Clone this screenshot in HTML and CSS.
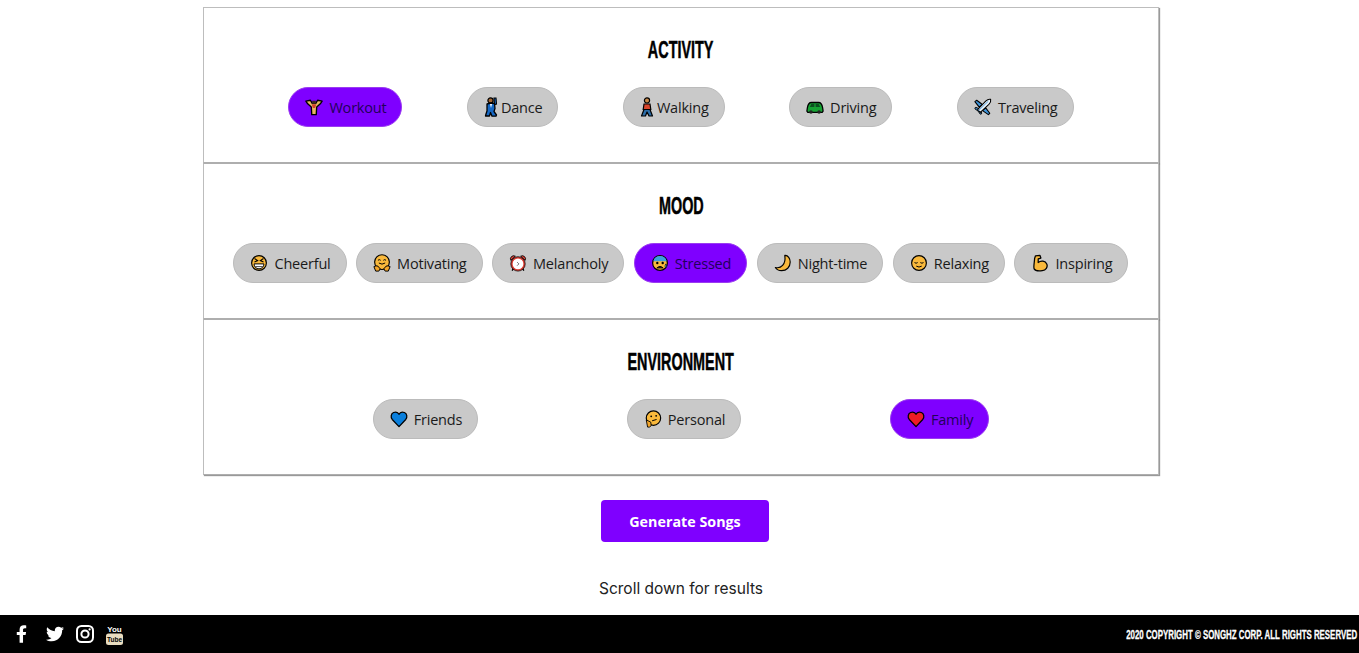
FILE: index.html
```html
<!DOCTYPE html>
<html lang="en">
  <head>
    <meta charset="UTF-8" />
    <meta name="viewport" content="width=device-width, initial-scale=1.0" />
    <title>Songhz</title>
    <link rel="stylesheet" href="styles.css">
  </head>
  <body>
    <!-- emoji set -->
    <svg class="sprite" xmlns="http://www.w3.org/2000/svg">
      <symbol id="e-workout" viewBox="0 0 20 20">
        <path d="M1 3.500L6 2.500 8 6h4l2-3.500 5 1-2 3-4 3.500-.5 8.500h-5L7 10 3 6.500z" fill="#e5b562" stroke="#000" stroke-width="1.500" stroke-linejoin="round"/>
        <path d="M7.500 7h5l-1.200 4H8.700z" fill="#d2402a"/>
        <rect x="8" y="3" width="4" height="3.500" fill="#3a2a1a"/>
      </symbol>
      <symbol id="e-dance" viewBox="0 0 14 20">
        <path d="M10 1l2 0 .5 6-2 .5z" fill="#1668c4" stroke="#000" stroke-width="1.100"/>
        <circle cx="6.500" cy="3.500" r="2.600" fill="#a5652f" stroke="#000" stroke-width="1.200"/>
        <path d="M3 7l4-1 3.500.5.500 5-1 3 2.500 3.500-.5 1.200H8L6.500 15.500 5.500 19H1.500L2 17l1-3z" fill="#1668c4" stroke="#000" stroke-width="1.300" stroke-linejoin="round"/>
        <path d="M6 7l1 4 1-4z" fill="#fff"/>
      </symbol>
      <symbol id="e-walking" viewBox="0 0 14 20">
        <circle cx="7" cy="3.400" r="2.600" fill="#c98a4a" stroke="#000" stroke-width="1.200"/>
        <path d="M4 7h6l.8 5.500H3.200z" fill="#d8452c" stroke="#000" stroke-width="1.200"/>
        <path d="M4 12.500h6l2.500 6.500H9L7 15l-1.500 4H1.500z" fill="#2c6da8" stroke="#000" stroke-width="1.200" stroke-linejoin="round"/>
      </symbol>
      <symbol id="e-driving" viewBox="0 0 20 20">
        <path d="M1 14.500l.5-3.500C2 8 3.500 5 6 5h8c2.500 0 4 3 4.500 6l.5 3.500-1 1.500H2z" fill="#17a334" stroke="#000" stroke-width="1.400" stroke-linejoin="round"/>
        <path d="M6 6.500h3.300V10H4.300zM10.700 6.500H14L15.700 10h-5z" fill="#0c4f20"/>
        <circle cx="5.500" cy="15.500" r="2" fill="#222"/>
        <circle cx="14.500" cy="15.500" r="2" fill="#222"/>
      </symbol>
      <symbol id="e-plane" viewBox="0 0 20 20">
        <path d="M9 7L3 2.500 1 4l5 6.500z" fill="#3f96dd" stroke="#000" stroke-width="1.200" stroke-linejoin="round"/>
        <path d="M13 11l4.500 6-1.500 1.500L9.500 14z" fill="#3f96dd" stroke="#000" stroke-width="1.200" stroke-linejoin="round"/>
        <path d="M4 11L1.500 10.500 1 12l3.500 2.500L7 18l1.500-.5L8 15z" fill="#3f96dd" stroke="#000" stroke-width="1.100" stroke-linejoin="round"/>
        <path d="M18.500 1.500c-2-.5-4 .5-5.500 2L4 13l3 3 9.500-9c1.500-1.500 2.500-3.500 2-5.500z" fill="#f2f7fb" stroke="#000" stroke-width="1.200" stroke-linejoin="round"/>
        <path d="M5 14l11-10.500" stroke="#3f96dd" stroke-width="1"/>
      </symbol>
      <symbol id="e-cheerful" viewBox="0 0 20 20">
        <circle cx="10" cy="10" r="8.200" fill="#f9b93c" stroke="#000" stroke-width="1.300"/>
        <path d="M5 5l3.500 2.300L5 9M15 5l-3.500 2.300L15 9" fill="none" stroke="#000" stroke-width="1.200"/>
        <path d="M4.500 11h11c0 3.200-2.500 5.500-5.500 5.500S4.500 14.200 4.500 11z" fill="#fff" stroke="#000" stroke-width="1.100"/>
        <path d="M6 14h8" stroke="#000" stroke-width=".8"/>
      </symbol>
      <symbol id="e-hug" viewBox="0 0 20 20">
        <circle cx="10" cy="9" r="8.200" fill="#f9b93c" stroke="#000" stroke-width="1.300"/>
        <path d="M5.500 7q1.500-1.500 3 0M11.500 7q1.500-1.500 3 0" fill="none" stroke="#000" stroke-width="1.100"/>
        <path d="M6.500 10q3.500 2.500 7 0" fill="none" stroke="#000" stroke-width="1.100"/>
        <path d="M1 14q2.500-1.500 4.500-.5l2.500 3-1.500 2.500H3zM19 14q-2.500-1.500-4.500-.5l-2.500 3 1.500 2.500H17z" fill="#f4a62a" stroke="#000" stroke-width="1.100" stroke-linejoin="round"/>
      </symbol>
      <symbol id="e-clock" viewBox="0 0 20 20">
        <path d="M2 7a3.500 3.500 0 0 1 5-4.500zM18 7a3.500 3.500 0 0 0-5-4.500z" fill="#e8443a" stroke="#000"/>
        <path d="M5 16l-1.500 2.500M15 16l1.500 2.500" stroke="#000" stroke-width="1.500"/>
        <circle cx="10" cy="11" r="7" fill="#fff" stroke="#d93b30" stroke-width="2"/>
        <circle cx="10" cy="11" r="8" fill="none" stroke="#000" stroke-width=".8"/>
        <path d="M9 9l2 2-2 2" fill="none" stroke="#666" stroke-width="1"/>
      </symbol>
      <symbol id="e-stressed" viewBox="0 0 20 20">
        <circle cx="10" cy="10" r="8.200" fill="#f9b93c" stroke="#000" stroke-width="1.300"/>
        <path d="M2.500 8a7.800 7.800 0 0 1 15 0z" fill="#3aa0e0"/>
        <circle cx="7" cy="10" r="1.300" fill="#000"/>
        <circle cx="13" cy="10" r="1.300" fill="#000"/>
        <path d="M6.500 15.500q3.500-3.500 7 0z" fill="#333" stroke="#000"/>
        <path d="M16.500 11q2 2.500 0 4.500q-2-2 0-4.500z" fill="#67c0f0" stroke="#000" stroke-width=".7"/>
      </symbol>
      <symbol id="e-moon" viewBox="0 0 20 20">
        <path d="M12.500 1.500c3 0 5.500 3.500 5.500 7.500 0 5.500-4 9.500-9.500 9.500-3 0-5.500-1-7-3.500 6 1.500 12-3 10.500-13.500z" fill="#f9b93c" stroke="#000" stroke-width="1.300" stroke-linejoin="round"/>
      </symbol>
      <symbol id="e-relax" viewBox="0 0 20 20">
        <circle cx="10" cy="10" r="8.200" fill="#f9b93c" stroke="#000" stroke-width="1.300"/>
        <path d="M5 9.500q1.800 1.500 3.500 0M11.500 9.500q1.800 1.500 3.500 0M7 13.500q3 2 6 0" fill="none" stroke="#000" stroke-width="1.100"/>
      </symbol>
      <symbol id="e-muscle" viewBox="0 0 20 20">
        <path d="M5 2l5-.5 1 3-3 1 0 4c3-2.500 8-2 9.500 1.500s-1 7-5 7.500-8 0-9-2S4 8 4 5z" fill="#f9b93c" stroke="#000" stroke-width="1.400" stroke-linejoin="round"/>
      </symbol>
      <symbol id="e-blue" viewBox="0 0 20 20">
        <path d="M10 18.500L2.500 10.500C.5 8 1 4 4 2.800c2.500-1 5 0 6 2 1-2 3.500-3 6-2 3 1.200 3.500 5.200 1.500 7.700z" fill="#0a7fdc" stroke="#000" stroke-width="1.400" stroke-linejoin="round"/>
      </symbol>
      <symbol id="e-think" viewBox="0 0 20 20">
        <circle cx="10.500" cy="9" r="8" fill="#f9b93c" stroke="#000" stroke-width="1.300"/>
        <circle cx="8" cy="7" r="1" fill="#000"/>
        <circle cx="13.500" cy="6.500" r="1" fill="#000"/>
        <path d="M9 12l5-1.500" stroke="#000" stroke-width="1.100"/>
        <path d="M2.500 11l5 2.500.5 4-2 1.500H4z" fill="#f4a62a" stroke="#000" stroke-linejoin="round"/>
      </symbol>
      <symbol id="e-red" viewBox="0 0 20 20">
        <path d="M10 18.500L2.500 10.500C.5 8 1 4 4 2.800c2.500-1 5 0 6 2 1-2 3.500-3 6-2 3 1.200 3.500 5.200 1.500 7.700z" fill="#ee1c25" stroke="#000" stroke-width="1.400" stroke-linejoin="round"/>
      </symbol>
    </svg>

    <div class="container">
      <!-- activity -->
      <section class="group">
        <h2><span>Activity</span></h2>
        <div class="chips">
          <button class="chip active"><svg class="emoji"><use href="#e-workout"/></svg>Workout</button>
          <button class="chip"><svg class="emoji narrow"><use href="#e-dance"/></svg>Dance</button>
          <button class="chip"><svg class="emoji narrow"><use href="#e-walking"/></svg>Walking</button>
          <button class="chip"><svg class="emoji"><use href="#e-driving"/></svg>Driving</button>
          <button class="chip"><svg class="emoji"><use href="#e-plane"/></svg>Traveling</button>
        </div>
      </section>

      <!-- mood -->
      <section class="group">
        <h2><span>Mood</span></h2>
        <div class="chips">
          <button class="chip"><svg class="emoji"><use href="#e-cheerful"/></svg>Cheerful</button>
          <button class="chip"><svg class="emoji"><use href="#e-hug"/></svg>Motivating</button>
          <button class="chip"><svg class="emoji"><use href="#e-clock"/></svg>Melancholy</button>
          <button class="chip active"><svg class="emoji"><use href="#e-stressed"/></svg>Stressed</button>
          <button class="chip"><svg class="emoji"><use href="#e-moon"/></svg>Night-time</button>
          <button class="chip"><svg class="emoji"><use href="#e-relax"/></svg>Relaxing</button>
          <button class="chip"><svg class="emoji"><use href="#e-muscle"/></svg>Inspiring</button>
        </div>
      </section>

      <!-- environment -->
      <section class="group">
        <h2><span>Environment</span></h2>
        <div class="chips">
          <button class="chip"><svg class="emoji"><use href="#e-blue"/></svg>Friends</button>
          <button class="chip"><svg class="emoji"><use href="#e-think"/></svg>Personal</button>
          <button class="chip active"><svg class="emoji"><use href="#e-red"/></svg>Family</button>
        </div>
      </section>
    </div>

    <div class="actions">
      <button class="generate">Generate Songs</button>
    </div>
    <p class="hint">Scroll down for results</p>

    <footer class="footer">
      <div class="social">
        <svg class="fb" viewBox="0 0 320 512"><path fill="#fff" d="M279.14 288l14.22-92.66h-88.91v-60.13c0-25.35 12.42-50.06 52.24-50.06h40.42V6.26S260.43 0 225.36 0c-73.22 0-121.08 44.38-121.08 124.72v70.62H22.89V288h81.39v224h100.17V288z"/></svg>
        <svg class="tw" viewBox="0 0 512 512"><path fill="#fff" d="M459.37 151.716c.325 4.548.325 9.097.325 13.645 0 138.72-105.583 298.558-298.558 298.558-59.452 0-114.68-17.219-161.137-47.106 8.447.974 16.568 1.299 25.34 1.299 49.055 0 94.213-16.568 130.274-44.832-46.132-.975-84.792-31.188-98.112-72.772 6.498.974 12.995 1.624 19.818 1.624 9.421 0 18.843-1.3 27.614-3.573-48.081-9.747-84.143-51.98-84.143-102.985v-1.299c13.969 7.797 30.214 12.67 47.431 13.319-28.264-18.843-46.781-51.005-46.781-87.391 0-19.492 5.197-37.36 14.294-52.954 51.655 63.675 129.3 105.258 216.365 109.807-1.624-7.797-2.599-15.918-2.599-24.04 0-57.828 46.782-104.934 104.934-104.934 30.213 0 57.502 12.67 76.67 33.137 23.715-4.548 46.456-13.32 66.599-25.34-7.798 24.366-24.366 44.833-46.782 58.827 21.117-2.273 41.584-8.122 60.426-16.243-14.292 20.791-32.161 39.308-52.628 54.253z"/></svg>
        <svg class="ig" viewBox="0 0 18 18"><rect x="1" y="1" width="16" height="16" rx="4.500" fill="none" stroke="#fff" stroke-width="2"/><circle cx="9" cy="9" r="3.600" fill="none" stroke="#fff" stroke-width="2"/><circle cx="13.600" cy="4.400" r="1.100" fill="#fff"/></svg>
        <svg class="yt" viewBox="0 0 17 21">
          <text x="8.500" y="8" class="yt-you">You</text>
          <rect x="0" y="9.500" width="17" height="11.500" rx="2.500" fill="#e8dcc0"/>
          <text x="8.500" y="18" class="yt-tube">Tube</text>
        </svg>
      </div>
      <p class="copyright">2020 Copyright © Songhz Corp. All Rights Reserved</p>
    </footer>
  </body>
</html>
```

FILE: styles.css
```css
body {
  margin: 0;
  height: 653px;
  overflow: hidden;
  background-color: #fff;
  font-family: "Open Sans", Arial, sans-serif;
  display: flex;
  flex-direction: column;
}
.sprite {
  display: none;
}
.container {
  width: 956px;
  margin: 7px 0 0 203px;
}
.group {
  height: 156px;
  box-sizing: border-box;
  padding: 0 20px;
  border: 1px solid #bdbdbd;
  border-bottom-color: #aeaeae;
  box-shadow: 1px 1px 1px rgba(0, 0, 0, 0.4);
  background-color: #fff;
}
.group + .group {
  border-top-color: #aeaeae;
}
h2 {
  margin: 0;
  padding-top: 28px;
  height: 51px;
  text-align: center;
  font-family: "Liberation Sans", Arial, sans-serif;
  font-size: 24px;
  line-height: 28px;
  text-transform: uppercase;
  color: #000;
}
/* no condensed display face here, so squeeze the bold one */
h2 span {
  display: inline-block;
  transform: scaleX(0.6);
  -webkit-text-stroke: 0.5px #000;
}
.chips {
  display: flex;
  justify-content: space-evenly;
  height: 40px;
}
.chip {
  display: flex;
  align-items: center;
  height: 40px;
  box-sizing: border-box;
  padding: 0 15px 0 16px;
  border: 1px solid #bbb;
  border-radius: 20px;
  background-color: #c9c9c9;
  color: #1a1a1a;
  font-family: "Open Sans", Arial, sans-serif;
  font-size: 14.5px;
  letter-spacing: -0.2px;
  cursor: pointer;
}
.chip.active {
  background-color: #7f00ff;
  border-color: #9a3cf0;
  color: #22005a;
}
.emoji {
  width: 18px;
  height: 18px;
  margin-right: 6px;
  flex-shrink: 0;
}
.emoji.narrow {
  width: 14px;
  height: 20px;
  margin-right: 3px;
}
.actions {
  display: flex;
  justify-content: center;
  margin: 25px 0 0 11px;
}
.generate {
  width: 168px;
  height: 42px;
  border: none;
  border-radius: 4px;
  background-color: #7f00ff;
  color: #fff;
  font-family: "Open Sans", Arial, sans-serif;
  font-size: 14.3px;
  font-weight: bold;
  cursor: pointer;
}
.hint {
  margin: 37px 0 0 3px;
  text-align: center;
  font-family: Inter, Arial, sans-serif;
  font-size: 15.5px;
  line-height: 20px;
  color: #222;
}
.footer {
  margin-top: auto;
  height: 38px;
  background-color: #000;
  display: flex;
  align-items: center;
  justify-content: space-between;
  padding: 0 2px 0 16px;
}
.social {
  display: flex;
  align-items: center;
}
.fb {
  width: 11px;
  height: 18px;
  margin-right: 19px;
}
.tw {
  width: 18px;
  height: 18px;
  margin-right: 12px;
}
.ig {
  width: 18px;
  height: 18px;
  margin-right: 12px;
}
.yt {
  width: 17px;
  height: 21px;
  overflow: visible;
}
.yt-you {
  fill: #fff;
  font-family: "Liberation Sans", Arial, sans-serif;
  font-size: 8px;
  font-weight: bold;
  text-anchor: middle;
}
.yt-tube {
  fill: #000;
  font-family: "Liberation Sans", Arial, sans-serif;
  font-size: 6.5px;
  font-weight: bold;
  text-anchor: middle;
}
.copyright {
  margin: 0;
  font-family: "Liberation Sans", Arial, sans-serif;
  font-size: 13px;
  font-weight: bold;
  text-transform: uppercase;
  color: #fff;
  transform: scaleX(0.606);
  transform-origin: right center;
  -webkit-text-stroke: 0.3px #fff;
}
```
